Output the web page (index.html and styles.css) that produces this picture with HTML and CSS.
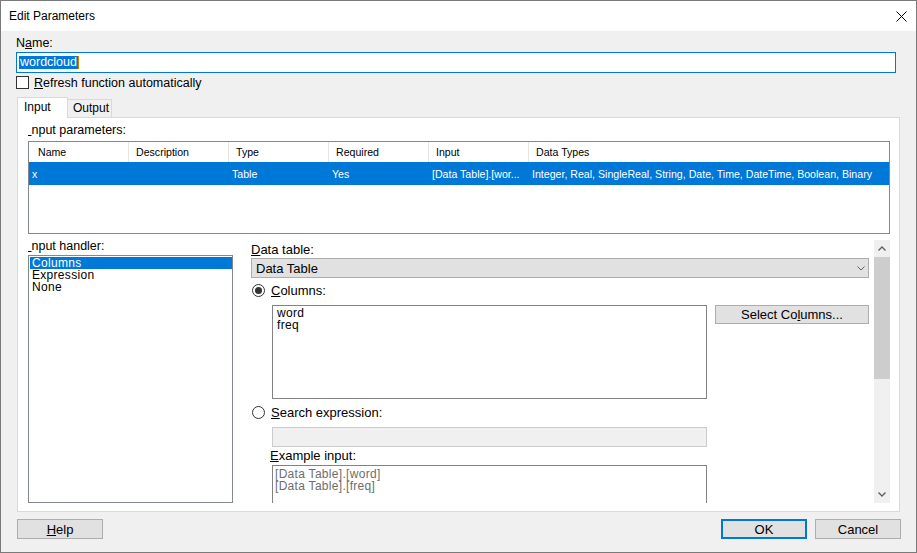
FILE: index.html
```html
<!DOCTYPE html>
<html>
<head>
<meta charset="utf-8">
<title>Edit Parameters</title>
<link rel="stylesheet" href="styles.css">
</head>
<body>
<div class="window">
  <div class="titlebar">
    <span class="title">Edit Parameters</span>
    <svg class="close" width="11" height="11" viewBox="0 0 11 11"><path d="M0.5 0.5 L10.5 10.5 M10.5 0.5 L0.5 10.5" stroke="#000" stroke-width="1" fill="none"/></svg>
  </div>
  <div class="client">
    <div class="lbl name-lbl">N<u>a</u>me:</div>
    <div class="name-input"><span class="sel">wordcloud</span><span class="caret"></span></div>
    <div class="check-row"><span class="checkbox"></span><span class="lbl"><u>R</u>efresh function automatically</span></div>
    <div class="tabs">
      <div class="tab active">Input</div>
      <div class="tab inactive">Output</div>
    </div>
    <div class="panel">
      <div class="lbl sec-lbl"><span class="mn">I</span>nput parameters:</div>
      <div class="plist">
        <div class="prow head">
          <div class="cell">Name</div>
          <div class="cell">Description</div>
          <div class="cell">Type</div>
          <div class="cell">Required</div>
          <div class="cell">Input</div>
          <div class="cell">Data Types</div>
        </div>
        <div class="prow selrow">
          <div class="cell">x</div>
          <div class="cell"></div>
          <div class="cell">Table</div>
          <div class="cell">Yes</div>
          <div class="cell">[Data Table].[wor...</div>
          <div class="cell">Integer, Real, SingleReal, String, Date, Time, DateTime, Boolean, Binary</div>
        </div>
      </div>
      <div class="handler">
        <div class="hleft">
          <div class="lbl hlbl"><span class="mn">I</span>nput handler:</div>
          <div class="listbox">
            <div class="item sel">Columns</div>
            <div class="item">Expression</div>
            <div class="item">None</div>
          </div>
        </div>
        <div class="hright">
          <div class="hcontent">
            <div class="dt-lbl"><u>D</u>ata table:</div>
            <div class="combo"><span>Data Table</span><svg width="8" height="5" viewBox="0 0 8 5"><path d="M0.5 0.5 L4 4 L7.5 0.5" stroke="#606060" stroke-width="1" fill="none"/></svg></div>
            <div class="radio-row r1"><span class="radio on"></span><span><u>C</u>olumns:</span></div>
            <div class="cols-row">
              <div class="colbox"><div>word</div><div>freq</div></div>
              <div class="btn selbtn">Select Co<u>l</u>umns...</div>
            </div>
            <div class="radio-row r2"><span class="radio"></span><span><u>S</u>earch expression:</span></div>
            <div class="search-input"></div>
            <div class="ex-lbl"><u>E</u>xample input:</div>
            <div class="exbox"><div>[Data Table].[word]</div><div>[Data Table].[freq]</div></div>
          </div>
          <div class="vscroll">
            <div class="sb-btn"><svg width="8" height="5" viewBox="0 0 8 5"><path d="M0.5 4.5 L4 1 L7.5 4.5" stroke="#606060" stroke-width="1.4" fill="none"/></svg></div>
            <div class="sb-thumb"></div>
            <div class="sb-track"></div>
            <div class="sb-btn"><svg width="8" height="5" viewBox="0 0 8 5"><path d="M0.5 0.5 L4 4 L7.5 0.5" stroke="#606060" stroke-width="1.4" fill="none"/></svg></div>
          </div>
        </div>
      </div>
    </div>
    <div class="footer">
      <div class="btn help"><span><u>H</u>elp</span></div>
      <div class="spacer"></div>
      <div class="btn ok">OK</div>
      <div class="btn">Cancel</div>
    </div>
  </div>
</div>
</body>
</html>
```

FILE: styles.css
```css
body {
  margin: 0;
  background: #ffffff;
}
.window {
  width: 917px;
  height: 553px;
  box-sizing: border-box;
  border: 1px solid #7a7a7a;
  display: flex;
  flex-direction: column;
  font-family: "Liberation Sans", Arial, sans-serif;
  color: #000;
  overflow: hidden;
}
u {
  text-underline-offset: 1px;
}
.titlebar {
  height: 30px;
  flex: none;
  background: #fff;
  display: flex;
  align-items: center;
  justify-content: space-between;
  padding: 0 9px 0 8px;
  font-size: 12px;
}
.close {
  display: block;
}
.client {
  flex: 1;
  background: #f0f0f0;
  padding: 0 15px;
  display: flex;
  flex-direction: column;
}
.lbl {
  font-size: 12.5px;
}
.name-lbl {
  margin-top: 3px;
  height: 18px;
  line-height: 18px;
}
.name-input {
  width: 880px;
  height: 21px;
  box-sizing: border-box;
  border: 1px solid #0078d7;
  background: #fff;
  display: flex;
  align-items: center;
  padding-left: 2px;
}
.name-input .sel {
  background: #0078d7;
  color: #fff;
  font-size: 12.5px;
  line-height: 13px;
  padding: 0 1px;
}
.caret {
  width: 1px;
  height: 13px;
  background: #d08000;
}
.check-row {
  margin-top: 3px;
  height: 13px;
  display: flex;
  align-items: center;
  gap: 5px;
}
.checkbox {
  width: 13px;
  height: 13px;
  box-sizing: border-box;
  border: 1px solid #333;
  background: #fff;
}
.tabs {
  margin-top: 8px;
  margin-left: 1px;
  height: 20px;
  display: flex;
  align-items: flex-start;
  position: relative;
  z-index: 1;
}
.tab {
  box-sizing: border-box;
  border: 1px solid #d9d9d9;
  border-bottom: none;
  font-size: 12px;
}
.tab.active {
  width: 51px;
  height: 21px;
  background: #fff;
  padding-left: 6px;
  line-height: 18px;
}
.tab.inactive {
  width: 45px;
  height: 18px;
  margin-top: 2px;
  margin-left: -1px;
  background: #f0f0f0;
  padding-left: 5px;
  line-height: 16px;
}
.panel {
  margin-left: 1px;
  width: 883px;
  height: 395px;
  box-sizing: border-box;
  border: 1px solid #d9d9d9;
  background: #fff;
  padding: 0 9px 0 10px;
  display: flex;
  flex-direction: column;
}
.mn {
  color: transparent;
  text-decoration: underline;
  text-decoration-color: #000;
  text-underline-offset: 1px;
}
.sec-lbl {
  margin-top: 4px;
  line-height: 17px;
  margin-bottom: 2px;
}
.plist {
  height: 93px;
  box-sizing: border-box;
  border: 1px solid #828790;
  font-size: 10.6px;
}
.prow {
  display: flex;
}
.prow.head {
  height: 20px;
}
.prow.selrow {
  height: 23px;
  background: #0078d7;
  color: #fff;
}
.cell {
  width: 100px;
  flex: none;
  box-sizing: border-box;
  display: flex;
  align-items: center;
  white-space: nowrap;
  overflow: hidden;
}
.head .cell {
  border-right: 1px solid #e5e5e5;
  padding-left: 7px;
}
.head .cell:first-child {
  padding-left: 9px;
}
.head .cell:last-child,
.selrow .cell:last-child {
  border-right: none;
  flex: 1;
  width: auto;
}
.selrow .cell {
  padding-left: 3px;
}
.handler {
  margin-top: 6px;
  height: 263px;
  display: flex;
}
.hleft {
  width: 205px;
  display: flex;
  flex-direction: column;
}
.hlbl {
  line-height: 13px;
  margin-bottom: 2px;
}
.listbox {
  flex: 1;
  box-sizing: border-box;
  border: 1px solid #828790;
  background: #fff;
  padding: 1px 0 0 1px;
  font-size: 12px;
  letter-spacing: 0.3px;
  line-height: 12px;
}
.item {
  height: 12px;
  padding-left: 2px;
}
.item.sel {
  background: #0078d7;
  color: #fff;
}
.hright {
  margin-left: 18px;
  flex: 1;
  display: flex;
  overflow: hidden;
}
.hcontent {
  flex: 1;
  overflow: hidden;
  font-size: 13px;
}
.dt-lbl {
  padding-top: 2px;
  line-height: 16px;
}
.combo {
  width: 618px;
  height: 20px;
  box-sizing: border-box;
  border: 1px solid #adadad;
  background: #e1e1e1;
  display: flex;
  align-items: center;
  justify-content: space-between;
  padding: 0 3px 0 4px;
}
.combo svg {
  display: block;
}
.radio-row {
  height: 16px;
  display: flex;
  align-items: center;
  gap: 6px;
  padding-left: 1px;
}
.radio-row.r1 {
  margin-top: 4px;
}
.radio-row.r2 {
  margin-top: 5px;
}
.radio {
  width: 13px;
  height: 13px;
  box-sizing: border-box;
  border: 1px solid #333;
  border-radius: 50%;
  background: #fff;
  display: flex;
  align-items: center;
  justify-content: center;
}
.radio.on::after {
  content: "";
  width: 7px;
  height: 7px;
  border-radius: 50%;
  background: #333;
}
.cols-row {
  margin-top: 7px;
  padding-left: 21px;
  display: flex;
  align-items: flex-start;
}
.colbox {
  width: 435px;
  height: 94px;
  box-sizing: border-box;
  border: 1px solid #828282;
  background: #fff;
  padding: 1px 0 0 4px;
  font-size: 12px;
  letter-spacing: 0.3px;
  line-height: 12px;
}
.btn {
  width: 86px;
  height: 20px;
  box-sizing: border-box;
  border: 1px solid #adadad;
  background: #e1e1e1;
  font-size: 13px;
  display: flex;
  align-items: center;
  justify-content: center;
}
.selbtn {
  margin-left: 8px;
  width: 154px;
  height: 19px;
}
.search-input {
  margin-top: 7px;
  margin-left: 21px;
  width: 435px;
  height: 20px;
  box-sizing: border-box;
  border: 1px solid #cccccc;
  background: #f0f0f0;
}
.ex-lbl {
  margin-top: 1px;
  margin-bottom: 1px;
  line-height: 16px;
  padding-left: 19px;
}
.exbox {
  margin-left: 21px;
  width: 435px;
  height: 60px;
  box-sizing: border-box;
  border: 1px solid #828282;
  background: #fff;
  color: #6d6d6d;
  padding: 2px 0 0 2px;
  font-size: 12px;
  letter-spacing: 0.3px;
  line-height: 12px;
}
.vscroll {
  width: 16px;
  flex: none;
  background: #f0f0f0;
  display: flex;
  flex-direction: column;
}
.sb-btn {
  height: 17px;
  flex: none;
  display: flex;
  align-items: center;
  justify-content: center;
}
.sb-btn svg {
  display: block;
}
.sb-thumb {
  height: 122px;
  flex: none;
  background: #cdcdcd;
}
.sb-track {
  flex: 1;
}
.footer {
  margin-top: 7px;
  display: flex;
}
.help {
  margin-left: 1px;
}
.spacer {
  flex: 1;
}
.btn.ok {
  border: 2px solid #0078d7;
  margin-right: 8px;
}
```
